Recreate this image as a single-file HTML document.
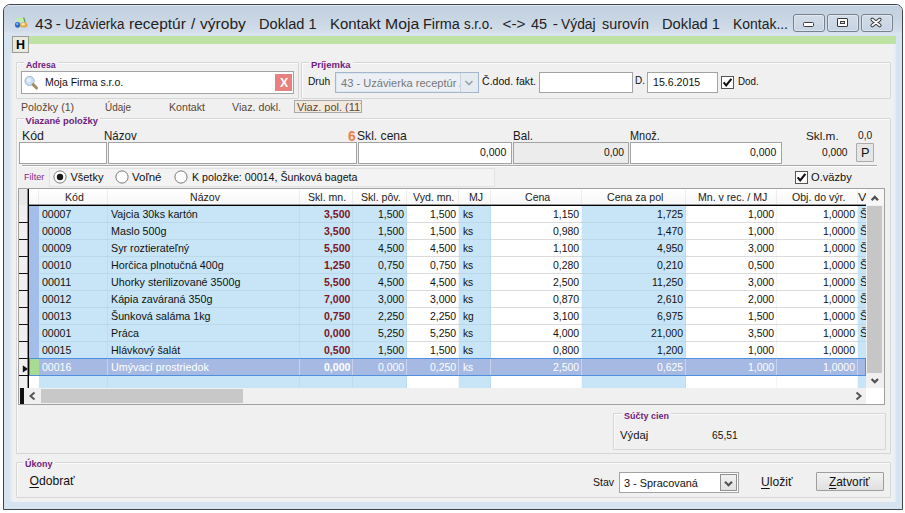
<!DOCTYPE html><html><head><meta charset="utf-8"><style>
html,body{margin:0;padding:0;width:905px;height:513px;overflow:hidden;background:#fff;}
body{position:relative;font-family:"Liberation Sans", sans-serif;}
.a{position:absolute;box-sizing:border-box;}
.t{white-space:nowrap;font-family:"Liberation Sans", sans-serif;color:#000;}
u{text-decoration:underline;text-underline-offset:2px;}
</style></head><body>
<div class="a" style="left:3px;top:4px;width:900px;height:506px;border:1px solid #3f4650;border-radius:7px 7px 0 0;background:#d6e3f0;"></div>
<div class="a" style="left:4px;top:5px;width:898px;height:30px;border-radius:6px 6px 0 0;background:linear-gradient(#c2d0df,#c8d5e3 45%,#d2dde9 85%,#dce6f0);"></div>
<div class="a" style="left:8px;top:5px;width:890px;height:1px;background:rgba(255,255,255,0.45);"></div>
<div class="a" style="left:12px;top:36px;width:884px;height:466px;background:#f0f0f0;"></div>
<div class="a" style="left:9px;top:53px;width:5px;height:449px;background:linear-gradient(90deg,#d6e3f0,#e9eef4 60%,#f0f0f0);"></div>
<div class="a" style="left:890px;top:44px;width:6px;height:458px;background:linear-gradient(90deg,#f0f0f0,#eef1f5 50%,#e2eaf3);"></div>
<div class="a" style="left:29px;top:36px;width:867px;height:8px;background:#bee2a3;"></div>
<div class="a" style="left:12px;top:36px;width:17px;height:17px;background:#e9e9dd;border:1px solid #9c9c96;"></div>
<div class="a t" style="left:16.00px;top:38.84px;font-size:12px;line-height:12px;font-weight:bold;transform:scaleX(1.0385);transform-origin:0 0;">H</div>
<svg class="a" style="left:12px;top:13px" width="20" height="18" viewBox="0 0 20 18">
<path d="M4 5 L11.5 4.8 L13 8.5 L6 8.8 Z" fill="#bdf0a6"/>
<path d="M11 4.6 L12.3 4.8 L13.8 9.5 L12.6 9.6 Z" fill="#4f8f55"/>
<ellipse cx="5.6" cy="11.8" rx="2.6" ry="2.9" fill="#2a66c8"/>
<ellipse cx="5.3" cy="11" rx="1.1" ry="1.2" fill="#7fc0ff"/>
<ellipse cx="11.8" cy="11.9" rx="3.9" ry="2.7" fill="#dcae48"/>
<ellipse cx="11.2" cy="11.2" rx="1.8" ry="1.3" fill="#ffe0b0"/>
</svg>
<div class="a t" style="left:34.80px;top:15.75px;font-size:15.3px;line-height:15.3px;transform:scaleX(1.0343);transform-origin:0 0;color:#222;">43</div>
<div class="a t" style="left:55.80px;top:15.75px;font-size:15.3px;line-height:15.3px;color:#222;">-</div>
<div class="a t" style="left:64.70px;top:15.75px;font-size:15.3px;line-height:15.3px;transform:scaleX(0.8733);transform-origin:0 0;color:#222;">Uzávierka</div>
<div class="a t" style="left:129.20px;top:15.75px;font-size:15.3px;line-height:15.3px;transform:scaleX(1.0139);transform-origin:0 0;color:#222;">receptúr</div>
<div class="a t" style="left:191.10px;top:15.75px;font-size:15.3px;line-height:15.3px;color:#222;">/</div>
<div class="a t" style="left:199.70px;top:15.75px;font-size:15.3px;line-height:15.3px;transform:scaleX(1.0186);transform-origin:0 0;color:#222;">výroby</div>
<div class="a t" style="left:258.70px;top:15.75px;font-size:15.3px;line-height:15.3px;transform:scaleX(0.9539);transform-origin:0 0;color:#222;">Doklad 1</div>
<div class="a t" style="left:330.40px;top:15.75px;font-size:15.3px;line-height:15.3px;transform:scaleX(0.9772);transform-origin:0 0;color:#222;">Kontakt</div>
<div class="a t" style="left:385.10px;top:15.75px;font-size:15.3px;line-height:15.3px;transform:scaleX(1.0314);transform-origin:0 0;color:#222;">Moja</div>
<div class="a t" style="left:422.90px;top:15.75px;font-size:15.3px;line-height:15.3px;transform:scaleX(0.9414);transform-origin:0 0;color:#222;">Firma</div>
<div class="a t" style="left:463.60px;top:15.75px;font-size:15.3px;line-height:15.3px;transform:scaleX(0.8715);transform-origin:0 0;color:#222;">s.r.o.</div>
<div class="a t" style="left:502.50px;top:15.75px;font-size:15.3px;line-height:15.3px;color:#222;">&lt;-&gt;</div>
<div class="a t" style="left:530.70px;top:15.75px;font-size:15.3px;line-height:15.3px;transform:scaleX(0.9461);transform-origin:0 0;color:#222;">45</div>
<div class="a t" style="left:552.80px;top:15.75px;font-size:15.3px;line-height:15.3px;color:#222;">-</div>
<div class="a t" style="left:560.80px;top:15.75px;font-size:15.3px;line-height:15.3px;transform:scaleX(0.9041);transform-origin:0 0;color:#222;">Výdaj</div>
<div class="a t" style="left:601.50px;top:15.75px;font-size:15.3px;line-height:15.3px;transform:scaleX(0.9368);transform-origin:0 0;color:#222;">surovín</div>
<div class="a t" style="left:661.90px;top:15.75px;font-size:15.3px;line-height:15.3px;transform:scaleX(0.9605);transform-origin:0 0;color:#222;">Doklad 1</div>
<div class="a t" style="left:733.20px;top:15.75px;font-size:15.3px;line-height:15.3px;transform:scaleX(0.9109);transform-origin:0 0;color:#222;">Kontak...</div>
<div class="a" style="left:793px;top:14px;width:32px;height:18px;border:1px solid #76838f;border-radius:3px;background:linear-gradient(#d3dde9,#c6d3e2);box-shadow:inset 0 0 0 1px rgba(255,255,255,0.35);"></div>
<div class="a" style="left:827px;top:14px;width:32px;height:18px;border:1px solid #76838f;border-radius:3px;background:linear-gradient(#d3dde9,#c6d3e2);box-shadow:inset 0 0 0 1px rgba(255,255,255,0.35);"></div>
<div class="a" style="left:861px;top:14px;width:32px;height:18px;border:1px solid #76838f;border-radius:3px;background:linear-gradient(#d3dde9,#c6d3e2);box-shadow:inset 0 0 0 1px rgba(255,255,255,0.35);"></div>
<div class="a" style="left:803px;top:22px;width:11px;height:5px;background:#fff;border:1px solid #3a3a3a;border-radius:1.5px;"></div>
<div class="a" style="left:837px;top:18px;width:11px;height:9px;border:1px solid #3a3a3a;background:#fff;border-radius:1px;"></div>
<div class="a" style="left:840px;top:21px;width:5px;height:3px;border:1px solid #3a3a3a;background:#dfe6ee;"></div>
<svg class="a" style="left:868px;top:16px" width="16" height="13" viewBox="0 0 16 13">
<path d="M4.2 3.5 L11.8 9.5 M11.8 3.5 L4.2 9.5" stroke="#3a3a3a" stroke-width="3.6" stroke-linecap="round"/>
<path d="M4.2 3.5 L11.8 9.5 M11.8 3.5 L4.2 9.5" stroke="#fff" stroke-width="1.6" stroke-linecap="round"/></svg>
<div class="a" style="left:16px;top:62px;width:283px;height:37px;border:1px solid #d6d6d6;border-radius:1px;box-shadow:inset 1px 1px 0 #fbfbfb;"></div>
<div class="a" style="left:24px;top:60px;width:33.8px;height:6px;background:#f0f0f0;"></div>
<div class="a t" style="left:26.00px;top:59.74px;font-size:9.4px;line-height:9.4px;font-weight:bold;transform:scaleX(0.9350);transform-origin:0 0;color:#6e1c7e;">Adresa</div>
<div class="a" style="left:301px;top:62px;width:590px;height:37px;border:1px solid #d6d6d6;border-radius:1px;box-shadow:inset 1px 1px 0 #fbfbfb;"></div>
<div class="a" style="left:309.3px;top:60px;width:43.5px;height:6px;background:#f0f0f0;"></div>
<div class="a t" style="left:311.30px;top:59.74px;font-size:9.4px;line-height:9.4px;font-weight:bold;transform:scaleX(1.0079);transform-origin:0 0;color:#6e1c7e;">Príjemka</div>
<div class="a" style="left:21px;top:71px;width:273px;height:23px;background:#fff;border:1px solid #a3a3a3;"></div>
<svg class="a" style="left:24px;top:75px" width="16" height="16" viewBox="0 0 16 16">
<circle cx="5.6" cy="6" r="4.6" fill="#c9def5" stroke="#9db8d6" stroke-width="1"/>
<circle cx="4.8" cy="5.2" r="2.2" fill="#e3effb"/>
<path d="M9.2 9.6 L12.6 13" stroke="#a88a62" stroke-width="3" stroke-linecap="round"/></svg>
<div class="a t" style="left:45.30px;top:76.69px;font-size:11px;line-height:11px;transform:scaleX(0.9548);transform-origin:0 0;color:#111;">Moja Firma s.r.o.</div>
<div class="a" style="left:275px;top:74px;width:17px;height:17px;background:#e6817f;"></div>
<div class="a t" style="left:279.60px;top:77.14px;font-size:12px;line-height:12px;font-weight:bold;transform:scaleX(1.0244);transform-origin:0 0;color:#fff;">X</div>
<div class="a t" style="left:308.30px;top:75.69px;font-size:11px;line-height:11px;transform:scaleX(0.9270);transform-origin:0 0;color:#111;">Druh</div>
<div class="a" style="left:335px;top:72px;width:144px;height:21px;background:#ecf0f4;border:1px solid #a3b6cc;box-shadow:inset 0 0 0 1px #dde6ef;"></div>
<div class="a" style="left:336px;top:73px;width:124px;height:19px;overflow:hidden;">
<div class="a t" style="left:4.50px;top:5.09px;font-size:11px;line-height:11px;transform:scaleX(1.0100);transform-origin:0 0;color:#777;">43 - Uzávierka receptúr / výroby</div>
</div>
<div class="a" style="left:460px;top:73px;width:18px;height:19px;border-left:1px solid #c9d3de;background:#e6ebf0;"></div>
<svg class="a" style="left:464px;top:79px" width="10" height="8" viewBox="0 0 10 8"><path d="M1.5 2 L5 5.5 L8.5 2" stroke="#9aa3ad" stroke-width="1.6" fill="none"/></svg>
<div class="a t" style="left:482.40px;top:76.09px;font-size:11px;line-height:11px;transform:scaleX(0.9600);transform-origin:0 0;color:#111;">Č.dod. fakt.</div>
<div class="a" style="left:539px;top:72px;width:94px;height:21px;background:#fff;border:1px solid #a3a3a3;"></div>
<div class="a t" style="left:634.50px;top:75.39px;font-size:11px;line-height:11px;transform:scaleX(0.9091);transform-origin:0 0;color:#111;">D.</div>
<div class="a" style="left:647px;top:72px;width:71px;height:21px;background:#fff;border:1px solid #a3a3a3;"></div>
<div class="a t" style="left:652.70px;top:77.49px;font-size:11px;line-height:11px;transform:scaleX(0.9646);transform-origin:0 0;color:#111;">15.6.2015</div>
<div class="a" style="left:721px;top:76px;width:13px;height:13px;background:#fff;border:1px solid #555;"></div>
<svg class="a" style="left:721px;top:76px" width="13" height="13" viewBox="0 0 13 13"><path d="M2.6 6.4 L5.2 9.4 L10.4 2.8" stroke="#111" stroke-width="2.1" fill="none"/></svg>
<div class="a t" style="left:737.60px;top:76.49px;font-size:11px;line-height:11px;transform:scaleX(0.8866);transform-origin:0 0;color:#111;">Dod.</div>
<div class="a t" style="left:20.50px;top:101.59px;font-size:11px;line-height:11px;transform:scaleX(0.9652);transform-origin:0 0;color:#5e4634;">Položky (1)</div>
<div class="a t" style="left:104.50px;top:101.59px;font-size:11px;line-height:11px;transform:scaleX(0.9047);transform-origin:0 0;color:#5e4634;">Údaje</div>
<div class="a t" style="left:169.10px;top:101.59px;font-size:11px;line-height:11px;transform:scaleX(0.9651);transform-origin:0 0;color:#5e4634;">Kontakt</div>
<div class="a t" style="left:232.20px;top:101.59px;font-size:11px;line-height:11px;transform:scaleX(0.9694);transform-origin:0 0;color:#5e4634;">Viaz. dokl.</div>
<div class="a" style="left:294px;top:100px;width:68px;height:13px;background:#f2e9dc;border:1px solid #a9a9a9;"></div>
<div class="a" style="left:295px;top:101px;width:66px;height:11px;overflow:hidden;">
<div class="a t" style="left:2.00px;top:0.69px;font-size:11px;line-height:11px;color:#5e4634;">Viaz. pol. (11)</div>
</div>
<div class="a" style="left:16px;top:118px;width:875px;height:336px;border:1px solid #d6d6d6;border-radius:1px;box-shadow:inset 1px 1px 0 #fbfbfb;"></div>
<div class="a" style="left:23.6px;top:116px;width:76.5px;height:6px;background:#f0f0f0;"></div>
<div class="a t" style="left:25.60px;top:116.14px;font-size:9.4px;line-height:9.4px;font-weight:bold;color:#6e1c7e;">Viazané položky</div>
<div class="a t" style="left:22.10px;top:129.67px;font-size:12.2px;line-height:12.2px;transform:scaleX(1.0135);transform-origin:0 0;color:#1a1a1a;">Kód</div>
<div class="a t" style="left:104.30px;top:129.67px;font-size:12.2px;line-height:12.2px;transform:scaleX(0.9457);transform-origin:0 0;color:#1a1a1a;">Názov</div>
<div class="a t" style="left:347.90px;top:128.55px;font-size:14px;line-height:14px;font-weight:bold;transform:scaleX(0.9762);transform-origin:0 0;color:#ee8048;">6</div>
<div class="a t" style="left:356.60px;top:129.67px;font-size:12.2px;line-height:12.2px;transform:scaleX(0.9944);transform-origin:0 0;color:#1a1a1a;">Skl. cena</div>
<div class="a t" style="left:513.30px;top:129.67px;font-size:12.2px;line-height:12.2px;transform:scaleX(0.9514);transform-origin:0 0;color:#1a1a1a;">Bal.</div>
<div class="a t" style="left:630.40px;top:129.67px;font-size:12.2px;line-height:12.2px;transform:scaleX(0.8940);transform-origin:0 0;color:#1a1a1a;">Množ.</div>
<div class="a t" style="left:805.50px;top:129.98px;font-size:11.6px;line-height:11.6px;transform:scaleX(1.0148);transform-origin:0 0;color:#1a1a1a;">Skl.m.</div>
<div class="a t" style="left:857.60px;top:129.93px;font-size:11.3px;line-height:11.3px;transform:scaleX(0.9041);transform-origin:0 0;color:#1a1a1a;">0,0</div>
<div class="a" style="left:19px;top:142px;width:88px;height:22px;background:#fff;border:1px solid #a3a3a3;"></div>
<div class="a" style="left:108px;top:142px;width:249px;height:22px;background:#fff;border:1px solid #a3a3a3;"></div>
<div class="a" style="left:358px;top:142px;width:154px;height:22px;background:#fff;border:1px solid #a3a3a3;"></div>
<div class="a t" style="left:480.40px;top:146.69px;font-size:11px;line-height:11px;transform:scaleX(0.9519);transform-origin:0 0;color:#111;">0,000</div>
<div class="a" style="left:513px;top:142px;width:116px;height:22px;background:#ececec;border:1px solid #a3a3a3;"></div>
<div class="a t" style="left:603.50px;top:146.69px;font-size:11px;line-height:11px;transform:scaleX(0.9343);transform-origin:0 0;color:#111;">0,00</div>
<div class="a" style="left:630px;top:142px;width:152px;height:22px;background:#fff;border:1px solid #a3a3a3;"></div>
<div class="a t" style="left:750.30px;top:146.69px;font-size:11px;line-height:11px;transform:scaleX(0.9519);transform-origin:0 0;color:#111;">0,000</div>
<div class="a t" style="left:821.70px;top:146.69px;font-size:11px;line-height:11px;transform:scaleX(0.9265);transform-origin:0 0;color:#111;">0,000</div>
<div class="a" style="left:856px;top:143px;width:18px;height:19px;background:#e6e6e6;border:1px solid #ababab;border-radius:1px;"></div>
<div class="a t" style="left:861.00px;top:146.84px;font-size:12px;line-height:12px;transform:scaleX(1.0619);transform-origin:0 0;color:#111;">P</div>
<div class="a" style="left:22px;top:165px;width:855px;height:1px;background:#a9a9a9;"></div>
<div class="a" style="left:22px;top:166px;width:855px;height:1px;background:#fff;"></div>
<div class="a t" style="left:23.60px;top:172.98px;font-size:9px;line-height:9px;transform:scaleX(1.0151);transform-origin:0 0;color:#7a2a8a;">Filter</div>
<div class="a" style="left:49px;top:168px;width:446px;height:19px;background:#f3f3f3;border:1px solid #e2e2e2;"></div>
<svg class="a" style="left:53.3px;top:170.3px" width="14" height="14" viewBox="0 0 14 14"><circle cx="7" cy="7" r="6.1" fill="#fff" stroke="#7a7a7a" stroke-width="1"/><circle cx="7" cy="7" r="3.2" fill="#1a1a1a"/></svg>
<div class="a t" style="left:70.40px;top:172.19px;font-size:11px;line-height:11px;color:#111;">Všetky</div>
<svg class="a" style="left:115.3px;top:170.3px" width="14" height="14" viewBox="0 0 14 14"><circle cx="7" cy="7" r="6.1" fill="#fff" stroke="#7a7a7a" stroke-width="1"/></svg>
<div class="a t" style="left:132.00px;top:172.19px;font-size:11px;line-height:11px;transform:scaleX(1.0428);transform-origin:0 0;color:#111;">Voľné</div>
<svg class="a" style="left:174.3px;top:170.3px" width="14" height="14" viewBox="0 0 14 14"><circle cx="7" cy="7" r="6.1" fill="#fff" stroke="#7a7a7a" stroke-width="1"/></svg>
<div class="a t" style="left:191.50px;top:172.19px;font-size:11px;line-height:11px;transform:scaleX(0.9700);transform-origin:0 0;color:#111;">K položke: 00014, Šunková bageta</div>
<div class="a" style="left:795px;top:171px;width:13px;height:13px;background:#fff;border:1px solid #555;"></div>
<svg class="a" style="left:795px;top:171px" width="13" height="13" viewBox="0 0 13 13"><path d="M2.6 6.4 L5.2 9.4 L10.4 2.8" stroke="#111" stroke-width="2.1" fill="none"/></svg>
<div class="a t" style="left:811.30px;top:172.19px;font-size:11px;line-height:11px;transform:scaleX(1.0088);transform-origin:0 0;color:#111;">O.väzby</div>
<div class="a" style="left:18px;top:188px;width:867px;height:217px;background:#fff;border:1px solid #a0a0a0;"></div>
<div class="a" style="left:19px;top:189px;width:847px;height:16px;background:linear-gradient(#ffffff,#f7f7f7);"></div>
<div class="a" style="left:38px;top:190px;width:1px;height:14px;background:#ececec;"></div>
<div class="a" style="left:107px;top:190px;width:1px;height:14px;background:#ececec;"></div>
<div class="a" style="left:299px;top:190px;width:1px;height:14px;background:#ececec;"></div>
<div class="a" style="left:352px;top:190px;width:1px;height:14px;background:#ececec;"></div>
<div class="a" style="left:406px;top:190px;width:1px;height:14px;background:#ececec;"></div>
<div class="a" style="left:458px;top:190px;width:1px;height:14px;background:#ececec;"></div>
<div class="a" style="left:490px;top:190px;width:1px;height:14px;background:#ececec;"></div>
<div class="a" style="left:581px;top:190px;width:1px;height:14px;background:#ececec;"></div>
<div class="a" style="left:685px;top:190px;width:1px;height:14px;background:#ececec;"></div>
<div class="a" style="left:776px;top:190px;width:1px;height:14px;background:#ececec;"></div>
<div class="a" style="left:857px;top:190px;width:1px;height:14px;background:#ececec;"></div>
<div class="a t" style="left:65.11px;top:191.69px;font-size:11px;line-height:11px;transform:scaleX(0.9600);transform-origin:0 0;color:#222;">Kód</div>
<div class="a t" style="left:190.03px;top:191.69px;font-size:11px;line-height:11px;transform:scaleX(0.9600);transform-origin:0 0;color:#222;">Názov</div>
<div class="a t" style="left:308.43px;top:191.69px;font-size:11px;line-height:11px;transform:scaleX(0.9600);transform-origin:0 0;color:#222;">Skl. mn.</div>
<div class="a t" style="left:361.14px;top:191.69px;font-size:11px;line-height:11px;transform:scaleX(0.9600);transform-origin:0 0;color:#222;">Skl. pôv.</div>
<div class="a t" style="left:413.36px;top:191.69px;font-size:11px;line-height:11px;transform:scaleX(0.9600);transform-origin:0 0;color:#222;">Vyd. mn.</div>
<div class="a t" style="left:468.96px;top:191.69px;font-size:11px;line-height:11px;transform:scaleX(0.9600);transform-origin:0 0;color:#222;">MJ</div>
<div class="a t" style="left:524.88px;top:191.69px;font-size:11px;line-height:11px;transform:scaleX(0.9600);transform-origin:0 0;color:#222;">Cena</div>
<div class="a t" style="left:606.82px;top:191.69px;font-size:11px;line-height:11px;transform:scaleX(0.9600);transform-origin:0 0;color:#222;">Cena za pol</div>
<div class="a t" style="left:697.89px;top:191.69px;font-size:11px;line-height:11px;transform:scaleX(0.9600);transform-origin:0 0;color:#222;">Mn. v rec. / MJ</div>
<div class="a t" style="left:791.80px;top:191.69px;font-size:11px;line-height:11px;transform:scaleX(0.9600);transform-origin:0 0;color:#222;">Obj. do výr.</div>
<div class="a t" style="left:857.60px;top:191.69px;font-size:11px;line-height:11px;transform:scaleX(1.1585);transform-origin:0 0;color:#222;">V</div>
<div class="a" style="left:19px;top:204px;width:847px;height:1px;background:#9a9a9a;"></div>
<div class="a" style="left:19px;top:205px;width:847px;height:1px;background:#000;"></div>
<div class="a" style="left:19px;top:189px;width:9px;height:199px;background:#f0f0f0;"></div>
<div class="a" style="left:19px;top:189px;width:9px;height:16px;background:#e9e9e9;"></div>
<div class="a" style="left:27px;top:189px;width:1px;height:199px;background:#8a8a8a;"></div>
<div class="a" style="left:28px;top:189px;width:1px;height:199px;background:#000;"></div>
<div class="a" style="left:39px;top:206px;width:69px;height:182px;background:#c7e5f7;"></div>
<div class="a" style="left:108px;top:206px;width:192px;height:182px;background:#c7e5f7;"></div>
<div class="a" style="left:300px;top:206px;width:53px;height:182px;background:#c7e5f7;"></div>
<div class="a" style="left:353px;top:206px;width:54px;height:182px;background:#c7e5f7;"></div>
<div class="a" style="left:407px;top:206px;width:52px;height:182px;background:#fff;"></div>
<div class="a" style="left:459px;top:206px;width:32px;height:182px;background:#c7e5f7;"></div>
<div class="a" style="left:491px;top:206px;width:91px;height:182px;background:#fff;"></div>
<div class="a" style="left:582px;top:206px;width:104px;height:182px;background:#c7e5f7;"></div>
<div class="a" style="left:686px;top:206px;width:91px;height:182px;background:#fff;"></div>
<div class="a" style="left:777px;top:206px;width:81px;height:182px;background:#fff;"></div>
<div class="a" style="left:858px;top:206px;width:8px;height:182px;background:#c7e5f7;"></div>
<div class="a" style="left:29px;top:206px;width:10px;height:169px;background:#a3bfe9;"></div>
<div class="a" style="left:107px;top:206px;width:1px;height:182px;background:rgba(0,0,0,0.04);"></div>
<div class="a" style="left:299px;top:206px;width:1px;height:182px;background:rgba(0,0,0,0.04);"></div>
<div class="a" style="left:352px;top:206px;width:1px;height:182px;background:rgba(0,0,0,0.04);"></div>
<div class="a" style="left:406px;top:206px;width:1px;height:182px;background:rgba(0,0,0,0.04);"></div>
<div class="a" style="left:458px;top:206px;width:1px;height:182px;background:rgba(0,0,0,0.04);"></div>
<div class="a" style="left:490px;top:206px;width:1px;height:182px;background:rgba(0,0,0,0.04);"></div>
<div class="a" style="left:581px;top:206px;width:1px;height:182px;background:rgba(0,0,0,0.04);"></div>
<div class="a" style="left:685px;top:206px;width:1px;height:182px;background:rgba(0,0,0,0.04);"></div>
<div class="a" style="left:776px;top:206px;width:1px;height:182px;background:rgba(0,0,0,0.04);"></div>
<div class="a" style="left:857px;top:206px;width:1px;height:182px;background:rgba(0,0,0,0.04);"></div>
<div class="a" style="left:39px;top:222px;width:69px;height:1px;background:rgba(0,0,0,0.055);"></div>
<div class="a" style="left:108px;top:222px;width:192px;height:1px;background:rgba(0,0,0,0.055);"></div>
<div class="a" style="left:300px;top:222px;width:53px;height:1px;background:rgba(0,0,0,0.055);"></div>
<div class="a" style="left:353px;top:222px;width:54px;height:1px;background:rgba(0,0,0,0.055);"></div>
<div class="a" style="left:407px;top:222px;width:52px;height:1px;background:rgba(0,0,0,0.14);"></div>
<div class="a" style="left:459px;top:222px;width:32px;height:1px;background:rgba(0,0,0,0.055);"></div>
<div class="a" style="left:491px;top:222px;width:91px;height:1px;background:rgba(0,0,0,0.14);"></div>
<div class="a" style="left:582px;top:222px;width:104px;height:1px;background:rgba(0,0,0,0.055);"></div>
<div class="a" style="left:686px;top:222px;width:91px;height:1px;background:rgba(0,0,0,0.14);"></div>
<div class="a" style="left:777px;top:222px;width:81px;height:1px;background:rgba(0,0,0,0.14);"></div>
<div class="a" style="left:858px;top:222px;width:8px;height:1px;background:rgba(0,0,0,0.055);"></div>
<div class="a" style="left:19px;top:222px;width:9px;height:1px;background:#111;"></div>
<div class="a" style="left:39px;top:239px;width:69px;height:1px;background:rgba(0,0,0,0.055);"></div>
<div class="a" style="left:108px;top:239px;width:192px;height:1px;background:rgba(0,0,0,0.055);"></div>
<div class="a" style="left:300px;top:239px;width:53px;height:1px;background:rgba(0,0,0,0.055);"></div>
<div class="a" style="left:353px;top:239px;width:54px;height:1px;background:rgba(0,0,0,0.055);"></div>
<div class="a" style="left:407px;top:239px;width:52px;height:1px;background:rgba(0,0,0,0.14);"></div>
<div class="a" style="left:459px;top:239px;width:32px;height:1px;background:rgba(0,0,0,0.055);"></div>
<div class="a" style="left:491px;top:239px;width:91px;height:1px;background:rgba(0,0,0,0.14);"></div>
<div class="a" style="left:582px;top:239px;width:104px;height:1px;background:rgba(0,0,0,0.055);"></div>
<div class="a" style="left:686px;top:239px;width:91px;height:1px;background:rgba(0,0,0,0.14);"></div>
<div class="a" style="left:777px;top:239px;width:81px;height:1px;background:rgba(0,0,0,0.14);"></div>
<div class="a" style="left:858px;top:239px;width:8px;height:1px;background:rgba(0,0,0,0.055);"></div>
<div class="a" style="left:19px;top:239px;width:9px;height:1px;background:#111;"></div>
<div class="a" style="left:39px;top:256px;width:69px;height:1px;background:rgba(0,0,0,0.055);"></div>
<div class="a" style="left:108px;top:256px;width:192px;height:1px;background:rgba(0,0,0,0.055);"></div>
<div class="a" style="left:300px;top:256px;width:53px;height:1px;background:rgba(0,0,0,0.055);"></div>
<div class="a" style="left:353px;top:256px;width:54px;height:1px;background:rgba(0,0,0,0.055);"></div>
<div class="a" style="left:407px;top:256px;width:52px;height:1px;background:rgba(0,0,0,0.14);"></div>
<div class="a" style="left:459px;top:256px;width:32px;height:1px;background:rgba(0,0,0,0.055);"></div>
<div class="a" style="left:491px;top:256px;width:91px;height:1px;background:rgba(0,0,0,0.14);"></div>
<div class="a" style="left:582px;top:256px;width:104px;height:1px;background:rgba(0,0,0,0.055);"></div>
<div class="a" style="left:686px;top:256px;width:91px;height:1px;background:rgba(0,0,0,0.14);"></div>
<div class="a" style="left:777px;top:256px;width:81px;height:1px;background:rgba(0,0,0,0.14);"></div>
<div class="a" style="left:858px;top:256px;width:8px;height:1px;background:rgba(0,0,0,0.055);"></div>
<div class="a" style="left:19px;top:256px;width:9px;height:1px;background:#111;"></div>
<div class="a" style="left:39px;top:273px;width:69px;height:1px;background:rgba(0,0,0,0.055);"></div>
<div class="a" style="left:108px;top:273px;width:192px;height:1px;background:rgba(0,0,0,0.055);"></div>
<div class="a" style="left:300px;top:273px;width:53px;height:1px;background:rgba(0,0,0,0.055);"></div>
<div class="a" style="left:353px;top:273px;width:54px;height:1px;background:rgba(0,0,0,0.055);"></div>
<div class="a" style="left:407px;top:273px;width:52px;height:1px;background:rgba(0,0,0,0.14);"></div>
<div class="a" style="left:459px;top:273px;width:32px;height:1px;background:rgba(0,0,0,0.055);"></div>
<div class="a" style="left:491px;top:273px;width:91px;height:1px;background:rgba(0,0,0,0.14);"></div>
<div class="a" style="left:582px;top:273px;width:104px;height:1px;background:rgba(0,0,0,0.055);"></div>
<div class="a" style="left:686px;top:273px;width:91px;height:1px;background:rgba(0,0,0,0.14);"></div>
<div class="a" style="left:777px;top:273px;width:81px;height:1px;background:rgba(0,0,0,0.14);"></div>
<div class="a" style="left:858px;top:273px;width:8px;height:1px;background:rgba(0,0,0,0.055);"></div>
<div class="a" style="left:19px;top:273px;width:9px;height:1px;background:#111;"></div>
<div class="a" style="left:39px;top:290px;width:69px;height:1px;background:rgba(0,0,0,0.055);"></div>
<div class="a" style="left:108px;top:290px;width:192px;height:1px;background:rgba(0,0,0,0.055);"></div>
<div class="a" style="left:300px;top:290px;width:53px;height:1px;background:rgba(0,0,0,0.055);"></div>
<div class="a" style="left:353px;top:290px;width:54px;height:1px;background:rgba(0,0,0,0.055);"></div>
<div class="a" style="left:407px;top:290px;width:52px;height:1px;background:rgba(0,0,0,0.14);"></div>
<div class="a" style="left:459px;top:290px;width:32px;height:1px;background:rgba(0,0,0,0.055);"></div>
<div class="a" style="left:491px;top:290px;width:91px;height:1px;background:rgba(0,0,0,0.14);"></div>
<div class="a" style="left:582px;top:290px;width:104px;height:1px;background:rgba(0,0,0,0.055);"></div>
<div class="a" style="left:686px;top:290px;width:91px;height:1px;background:rgba(0,0,0,0.14);"></div>
<div class="a" style="left:777px;top:290px;width:81px;height:1px;background:rgba(0,0,0,0.14);"></div>
<div class="a" style="left:858px;top:290px;width:8px;height:1px;background:rgba(0,0,0,0.055);"></div>
<div class="a" style="left:19px;top:290px;width:9px;height:1px;background:#111;"></div>
<div class="a" style="left:39px;top:307px;width:69px;height:1px;background:rgba(0,0,0,0.055);"></div>
<div class="a" style="left:108px;top:307px;width:192px;height:1px;background:rgba(0,0,0,0.055);"></div>
<div class="a" style="left:300px;top:307px;width:53px;height:1px;background:rgba(0,0,0,0.055);"></div>
<div class="a" style="left:353px;top:307px;width:54px;height:1px;background:rgba(0,0,0,0.055);"></div>
<div class="a" style="left:407px;top:307px;width:52px;height:1px;background:rgba(0,0,0,0.14);"></div>
<div class="a" style="left:459px;top:307px;width:32px;height:1px;background:rgba(0,0,0,0.055);"></div>
<div class="a" style="left:491px;top:307px;width:91px;height:1px;background:rgba(0,0,0,0.14);"></div>
<div class="a" style="left:582px;top:307px;width:104px;height:1px;background:rgba(0,0,0,0.055);"></div>
<div class="a" style="left:686px;top:307px;width:91px;height:1px;background:rgba(0,0,0,0.14);"></div>
<div class="a" style="left:777px;top:307px;width:81px;height:1px;background:rgba(0,0,0,0.14);"></div>
<div class="a" style="left:858px;top:307px;width:8px;height:1px;background:rgba(0,0,0,0.055);"></div>
<div class="a" style="left:19px;top:307px;width:9px;height:1px;background:#111;"></div>
<div class="a" style="left:39px;top:324px;width:69px;height:1px;background:rgba(0,0,0,0.055);"></div>
<div class="a" style="left:108px;top:324px;width:192px;height:1px;background:rgba(0,0,0,0.055);"></div>
<div class="a" style="left:300px;top:324px;width:53px;height:1px;background:rgba(0,0,0,0.055);"></div>
<div class="a" style="left:353px;top:324px;width:54px;height:1px;background:rgba(0,0,0,0.055);"></div>
<div class="a" style="left:407px;top:324px;width:52px;height:1px;background:rgba(0,0,0,0.14);"></div>
<div class="a" style="left:459px;top:324px;width:32px;height:1px;background:rgba(0,0,0,0.055);"></div>
<div class="a" style="left:491px;top:324px;width:91px;height:1px;background:rgba(0,0,0,0.14);"></div>
<div class="a" style="left:582px;top:324px;width:104px;height:1px;background:rgba(0,0,0,0.055);"></div>
<div class="a" style="left:686px;top:324px;width:91px;height:1px;background:rgba(0,0,0,0.14);"></div>
<div class="a" style="left:777px;top:324px;width:81px;height:1px;background:rgba(0,0,0,0.14);"></div>
<div class="a" style="left:858px;top:324px;width:8px;height:1px;background:rgba(0,0,0,0.055);"></div>
<div class="a" style="left:19px;top:324px;width:9px;height:1px;background:#111;"></div>
<div class="a" style="left:39px;top:341px;width:69px;height:1px;background:rgba(0,0,0,0.055);"></div>
<div class="a" style="left:108px;top:341px;width:192px;height:1px;background:rgba(0,0,0,0.055);"></div>
<div class="a" style="left:300px;top:341px;width:53px;height:1px;background:rgba(0,0,0,0.055);"></div>
<div class="a" style="left:353px;top:341px;width:54px;height:1px;background:rgba(0,0,0,0.055);"></div>
<div class="a" style="left:407px;top:341px;width:52px;height:1px;background:rgba(0,0,0,0.14);"></div>
<div class="a" style="left:459px;top:341px;width:32px;height:1px;background:rgba(0,0,0,0.055);"></div>
<div class="a" style="left:491px;top:341px;width:91px;height:1px;background:rgba(0,0,0,0.14);"></div>
<div class="a" style="left:582px;top:341px;width:104px;height:1px;background:rgba(0,0,0,0.055);"></div>
<div class="a" style="left:686px;top:341px;width:91px;height:1px;background:rgba(0,0,0,0.14);"></div>
<div class="a" style="left:777px;top:341px;width:81px;height:1px;background:rgba(0,0,0,0.14);"></div>
<div class="a" style="left:858px;top:341px;width:8px;height:1px;background:rgba(0,0,0,0.055);"></div>
<div class="a" style="left:19px;top:341px;width:9px;height:1px;background:#111;"></div>
<div class="a" style="left:39px;top:358px;width:69px;height:1px;background:rgba(0,0,0,0.055);"></div>
<div class="a" style="left:108px;top:358px;width:192px;height:1px;background:rgba(0,0,0,0.055);"></div>
<div class="a" style="left:300px;top:358px;width:53px;height:1px;background:rgba(0,0,0,0.055);"></div>
<div class="a" style="left:353px;top:358px;width:54px;height:1px;background:rgba(0,0,0,0.055);"></div>
<div class="a" style="left:407px;top:358px;width:52px;height:1px;background:rgba(0,0,0,0.14);"></div>
<div class="a" style="left:459px;top:358px;width:32px;height:1px;background:rgba(0,0,0,0.055);"></div>
<div class="a" style="left:491px;top:358px;width:91px;height:1px;background:rgba(0,0,0,0.14);"></div>
<div class="a" style="left:582px;top:358px;width:104px;height:1px;background:rgba(0,0,0,0.055);"></div>
<div class="a" style="left:686px;top:358px;width:91px;height:1px;background:rgba(0,0,0,0.14);"></div>
<div class="a" style="left:777px;top:358px;width:81px;height:1px;background:rgba(0,0,0,0.14);"></div>
<div class="a" style="left:858px;top:358px;width:8px;height:1px;background:rgba(0,0,0,0.055);"></div>
<div class="a" style="left:19px;top:358px;width:9px;height:1px;background:#111;"></div>
<div class="a" style="left:39px;top:375px;width:69px;height:1px;background:rgba(0,0,0,0.055);"></div>
<div class="a" style="left:108px;top:375px;width:192px;height:1px;background:rgba(0,0,0,0.055);"></div>
<div class="a" style="left:300px;top:375px;width:53px;height:1px;background:rgba(0,0,0,0.055);"></div>
<div class="a" style="left:353px;top:375px;width:54px;height:1px;background:rgba(0,0,0,0.055);"></div>
<div class="a" style="left:407px;top:375px;width:52px;height:1px;background:rgba(0,0,0,0.14);"></div>
<div class="a" style="left:459px;top:375px;width:32px;height:1px;background:rgba(0,0,0,0.055);"></div>
<div class="a" style="left:491px;top:375px;width:91px;height:1px;background:rgba(0,0,0,0.14);"></div>
<div class="a" style="left:582px;top:375px;width:104px;height:1px;background:rgba(0,0,0,0.055);"></div>
<div class="a" style="left:686px;top:375px;width:91px;height:1px;background:rgba(0,0,0,0.14);"></div>
<div class="a" style="left:777px;top:375px;width:81px;height:1px;background:rgba(0,0,0,0.14);"></div>
<div class="a" style="left:858px;top:375px;width:8px;height:1px;background:rgba(0,0,0,0.055);"></div>
<div class="a" style="left:19px;top:375px;width:9px;height:1px;background:#111;"></div>
<div class="a" style="left:29px;top:358px;width:837px;height:18px;background:#a6b9e3;border:1px solid #4f8fe0;"></div>
<div class="a" style="left:30px;top:359px;width:9px;height:16px;background:#a8dc94;"></div>
<div class="a" style="left:107px;top:359px;width:1px;height:16px;background:#c6d2ee;"></div>
<div class="a" style="left:299px;top:359px;width:1px;height:16px;background:#c6d2ee;"></div>
<div class="a" style="left:352px;top:359px;width:1px;height:16px;background:#c6d2ee;"></div>
<div class="a" style="left:406px;top:359px;width:1px;height:16px;background:#c6d2ee;"></div>
<div class="a" style="left:458px;top:359px;width:1px;height:16px;background:#c6d2ee;"></div>
<div class="a" style="left:490px;top:359px;width:1px;height:16px;background:#c6d2ee;"></div>
<div class="a" style="left:581px;top:359px;width:1px;height:16px;background:#c6d2ee;"></div>
<div class="a" style="left:685px;top:359px;width:1px;height:16px;background:#c6d2ee;"></div>
<div class="a" style="left:776px;top:359px;width:1px;height:16px;background:#c6d2ee;"></div>
<div class="a" style="left:857px;top:359px;width:1px;height:16px;background:#c6d2ee;"></div>
<svg class="a" style="left:22px;top:365px" width="7" height="8" viewBox="0 0 7 8"><path d="M0.8 0.3 L6 3.9 L0.8 7.5Z" fill="#111"/></svg>
<div class="a t" style="left:42.30px;top:208.69px;font-size:11px;line-height:11px;transform:scaleX(0.9580);transform-origin:0 0;color:#111;">00007</div>
<div class="a t" style="left:111.30px;top:208.69px;font-size:11px;line-height:11px;transform:scaleX(0.9750);transform-origin:0 0;color:#111;">Vajcia 30ks kartón</div>
<div class="a t" style="left:323.58px;top:208.69px;font-size:11px;line-height:11px;font-weight:bold;transform:scaleX(0.9600);transform-origin:0 0;color:#7c1625;">3,500</div>
<div class="a t" style="left:377.85px;top:208.69px;font-size:11px;line-height:11px;transform:scaleX(0.9500);transform-origin:0 0;color:#111;">1,500</div>
<div class="a t" style="left:429.85px;top:208.69px;font-size:11px;line-height:11px;transform:scaleX(0.9500);transform-origin:0 0;color:#111;">1,500</div>
<div class="a t" style="left:552.85px;top:208.69px;font-size:11px;line-height:11px;transform:scaleX(0.9500);transform-origin:0 0;color:#111;">1,150</div>
<div class="a t" style="left:656.85px;top:208.69px;font-size:11px;line-height:11px;transform:scaleX(0.9500);transform-origin:0 0;color:#111;">1,725</div>
<div class="a t" style="left:747.85px;top:208.69px;font-size:11px;line-height:11px;transform:scaleX(0.9500);transform-origin:0 0;color:#111;">1,000</div>
<div class="a t" style="left:823.04px;top:208.69px;font-size:11px;line-height:11px;transform:scaleX(0.9500);transform-origin:0 0;color:#111;">1,0000</div>
<div class="a t" style="left:462.50px;top:208.69px;font-size:11px;line-height:11px;transform:scaleX(0.9300);transform-origin:0 0;color:#111;">ks</div>
<div class="a t" style="left:860.30px;top:208.69px;font-size:11px;line-height:11px;transform:scaleX(1.0222);transform-origin:0 0;color:#111;">Š</div>
<div class="a t" style="left:42.30px;top:225.69px;font-size:11px;line-height:11px;transform:scaleX(0.9580);transform-origin:0 0;color:#111;">00008</div>
<div class="a t" style="left:111.30px;top:225.69px;font-size:11px;line-height:11px;transform:scaleX(0.9750);transform-origin:0 0;color:#111;">Maslo 500g</div>
<div class="a t" style="left:323.58px;top:225.69px;font-size:11px;line-height:11px;font-weight:bold;transform:scaleX(0.9600);transform-origin:0 0;color:#7c1625;">3,500</div>
<div class="a t" style="left:377.85px;top:225.69px;font-size:11px;line-height:11px;transform:scaleX(0.9500);transform-origin:0 0;color:#111;">1,500</div>
<div class="a t" style="left:429.85px;top:225.69px;font-size:11px;line-height:11px;transform:scaleX(0.9500);transform-origin:0 0;color:#111;">1,500</div>
<div class="a t" style="left:552.85px;top:225.69px;font-size:11px;line-height:11px;transform:scaleX(0.9500);transform-origin:0 0;color:#111;">0,980</div>
<div class="a t" style="left:656.85px;top:225.69px;font-size:11px;line-height:11px;transform:scaleX(0.9500);transform-origin:0 0;color:#111;">1,470</div>
<div class="a t" style="left:747.85px;top:225.69px;font-size:11px;line-height:11px;transform:scaleX(0.9500);transform-origin:0 0;color:#111;">1,000</div>
<div class="a t" style="left:823.04px;top:225.69px;font-size:11px;line-height:11px;transform:scaleX(0.9500);transform-origin:0 0;color:#111;">1,0000</div>
<div class="a t" style="left:462.50px;top:225.69px;font-size:11px;line-height:11px;transform:scaleX(0.9300);transform-origin:0 0;color:#111;">ks</div>
<div class="a t" style="left:860.30px;top:225.69px;font-size:11px;line-height:11px;transform:scaleX(1.0222);transform-origin:0 0;color:#111;">Š</div>
<div class="a t" style="left:42.30px;top:242.69px;font-size:11px;line-height:11px;transform:scaleX(0.9580);transform-origin:0 0;color:#111;">00009</div>
<div class="a t" style="left:111.30px;top:242.69px;font-size:11px;line-height:11px;transform:scaleX(0.9750);transform-origin:0 0;color:#111;">Syr roztierateľný</div>
<div class="a t" style="left:323.58px;top:242.69px;font-size:11px;line-height:11px;font-weight:bold;transform:scaleX(0.9600);transform-origin:0 0;color:#7c1625;">5,500</div>
<div class="a t" style="left:377.85px;top:242.69px;font-size:11px;line-height:11px;transform:scaleX(0.9500);transform-origin:0 0;color:#111;">4,500</div>
<div class="a t" style="left:429.85px;top:242.69px;font-size:11px;line-height:11px;transform:scaleX(0.9500);transform-origin:0 0;color:#111;">4,500</div>
<div class="a t" style="left:552.85px;top:242.69px;font-size:11px;line-height:11px;transform:scaleX(0.9500);transform-origin:0 0;color:#111;">1,100</div>
<div class="a t" style="left:656.85px;top:242.69px;font-size:11px;line-height:11px;transform:scaleX(0.9500);transform-origin:0 0;color:#111;">4,950</div>
<div class="a t" style="left:747.85px;top:242.69px;font-size:11px;line-height:11px;transform:scaleX(0.9500);transform-origin:0 0;color:#111;">3,000</div>
<div class="a t" style="left:823.04px;top:242.69px;font-size:11px;line-height:11px;transform:scaleX(0.9500);transform-origin:0 0;color:#111;">1,0000</div>
<div class="a t" style="left:462.50px;top:242.69px;font-size:11px;line-height:11px;transform:scaleX(0.9300);transform-origin:0 0;color:#111;">ks</div>
<div class="a t" style="left:860.30px;top:242.69px;font-size:11px;line-height:11px;transform:scaleX(1.0222);transform-origin:0 0;color:#111;">Š</div>
<div class="a t" style="left:42.30px;top:259.69px;font-size:11px;line-height:11px;transform:scaleX(0.9580);transform-origin:0 0;color:#111;">00010</div>
<div class="a t" style="left:111.30px;top:259.69px;font-size:11px;line-height:11px;transform:scaleX(0.9750);transform-origin:0 0;color:#111;">Horčica plnotučná 400g</div>
<div class="a t" style="left:323.58px;top:259.69px;font-size:11px;line-height:11px;font-weight:bold;transform:scaleX(0.9600);transform-origin:0 0;color:#7c1625;">1,250</div>
<div class="a t" style="left:377.85px;top:259.69px;font-size:11px;line-height:11px;transform:scaleX(0.9500);transform-origin:0 0;color:#111;">0,750</div>
<div class="a t" style="left:429.85px;top:259.69px;font-size:11px;line-height:11px;transform:scaleX(0.9500);transform-origin:0 0;color:#111;">0,750</div>
<div class="a t" style="left:552.85px;top:259.69px;font-size:11px;line-height:11px;transform:scaleX(0.9500);transform-origin:0 0;color:#111;">0,280</div>
<div class="a t" style="left:656.85px;top:259.69px;font-size:11px;line-height:11px;transform:scaleX(0.9500);transform-origin:0 0;color:#111;">0,210</div>
<div class="a t" style="left:747.85px;top:259.69px;font-size:11px;line-height:11px;transform:scaleX(0.9500);transform-origin:0 0;color:#111;">0,500</div>
<div class="a t" style="left:823.04px;top:259.69px;font-size:11px;line-height:11px;transform:scaleX(0.9500);transform-origin:0 0;color:#111;">1,0000</div>
<div class="a t" style="left:462.50px;top:259.69px;font-size:11px;line-height:11px;transform:scaleX(0.9300);transform-origin:0 0;color:#111;">ks</div>
<div class="a t" style="left:860.30px;top:259.69px;font-size:11px;line-height:11px;transform:scaleX(1.0222);transform-origin:0 0;color:#111;">Š</div>
<div class="a t" style="left:42.30px;top:276.69px;font-size:11px;line-height:11px;transform:scaleX(0.9843);transform-origin:0 0;color:#111;">00011</div>
<div class="a t" style="left:111.30px;top:276.69px;font-size:11px;line-height:11px;transform:scaleX(0.9750);transform-origin:0 0;color:#111;">Uhorky sterilizované 3500g</div>
<div class="a t" style="left:323.58px;top:276.69px;font-size:11px;line-height:11px;font-weight:bold;transform:scaleX(0.9600);transform-origin:0 0;color:#7c1625;">5,500</div>
<div class="a t" style="left:377.85px;top:276.69px;font-size:11px;line-height:11px;transform:scaleX(0.9500);transform-origin:0 0;color:#111;">4,500</div>
<div class="a t" style="left:429.85px;top:276.69px;font-size:11px;line-height:11px;transform:scaleX(0.9500);transform-origin:0 0;color:#111;">4,500</div>
<div class="a t" style="left:552.85px;top:276.69px;font-size:11px;line-height:11px;transform:scaleX(0.9500);transform-origin:0 0;color:#111;">2,500</div>
<div class="a t" style="left:651.82px;top:276.69px;font-size:11px;line-height:11px;transform:scaleX(0.9500);transform-origin:0 0;color:#111;">11,250</div>
<div class="a t" style="left:747.85px;top:276.69px;font-size:11px;line-height:11px;transform:scaleX(0.9500);transform-origin:0 0;color:#111;">3,000</div>
<div class="a t" style="left:823.04px;top:276.69px;font-size:11px;line-height:11px;transform:scaleX(0.9500);transform-origin:0 0;color:#111;">1,0000</div>
<div class="a t" style="left:462.50px;top:276.69px;font-size:11px;line-height:11px;transform:scaleX(0.9300);transform-origin:0 0;color:#111;">ks</div>
<div class="a t" style="left:860.30px;top:276.69px;font-size:11px;line-height:11px;transform:scaleX(1.0222);transform-origin:0 0;color:#111;">Š</div>
<div class="a t" style="left:42.30px;top:293.69px;font-size:11px;line-height:11px;transform:scaleX(0.9580);transform-origin:0 0;color:#111;">00012</div>
<div class="a t" style="left:111.30px;top:293.69px;font-size:11px;line-height:11px;transform:scaleX(0.9750);transform-origin:0 0;color:#111;">Kápia zaváraná 350g</div>
<div class="a t" style="left:323.58px;top:293.69px;font-size:11px;line-height:11px;font-weight:bold;transform:scaleX(0.9600);transform-origin:0 0;color:#7c1625;">7,000</div>
<div class="a t" style="left:377.85px;top:293.69px;font-size:11px;line-height:11px;transform:scaleX(0.9500);transform-origin:0 0;color:#111;">3,000</div>
<div class="a t" style="left:429.85px;top:293.69px;font-size:11px;line-height:11px;transform:scaleX(0.9500);transform-origin:0 0;color:#111;">3,000</div>
<div class="a t" style="left:552.85px;top:293.69px;font-size:11px;line-height:11px;transform:scaleX(0.9500);transform-origin:0 0;color:#111;">0,870</div>
<div class="a t" style="left:656.85px;top:293.69px;font-size:11px;line-height:11px;transform:scaleX(0.9500);transform-origin:0 0;color:#111;">2,610</div>
<div class="a t" style="left:747.85px;top:293.69px;font-size:11px;line-height:11px;transform:scaleX(0.9500);transform-origin:0 0;color:#111;">2,000</div>
<div class="a t" style="left:823.04px;top:293.69px;font-size:11px;line-height:11px;transform:scaleX(0.9500);transform-origin:0 0;color:#111;">1,0000</div>
<div class="a t" style="left:462.50px;top:293.69px;font-size:11px;line-height:11px;transform:scaleX(0.9300);transform-origin:0 0;color:#111;">ks</div>
<div class="a t" style="left:860.30px;top:293.69px;font-size:11px;line-height:11px;transform:scaleX(1.0222);transform-origin:0 0;color:#111;">Š</div>
<div class="a t" style="left:42.30px;top:310.69px;font-size:11px;line-height:11px;transform:scaleX(0.9580);transform-origin:0 0;color:#111;">00013</div>
<div class="a t" style="left:111.30px;top:310.69px;font-size:11px;line-height:11px;transform:scaleX(0.9750);transform-origin:0 0;color:#111;">Šunková saláma 1kg</div>
<div class="a t" style="left:323.58px;top:310.69px;font-size:11px;line-height:11px;font-weight:bold;transform:scaleX(0.9600);transform-origin:0 0;color:#7c1625;">0,750</div>
<div class="a t" style="left:377.85px;top:310.69px;font-size:11px;line-height:11px;transform:scaleX(0.9500);transform-origin:0 0;color:#111;">2,250</div>
<div class="a t" style="left:429.85px;top:310.69px;font-size:11px;line-height:11px;transform:scaleX(0.9500);transform-origin:0 0;color:#111;">2,250</div>
<div class="a t" style="left:552.85px;top:310.69px;font-size:11px;line-height:11px;transform:scaleX(0.9500);transform-origin:0 0;color:#111;">3,100</div>
<div class="a t" style="left:656.85px;top:310.69px;font-size:11px;line-height:11px;transform:scaleX(0.9500);transform-origin:0 0;color:#111;">6,975</div>
<div class="a t" style="left:747.85px;top:310.69px;font-size:11px;line-height:11px;transform:scaleX(0.9500);transform-origin:0 0;color:#111;">1,500</div>
<div class="a t" style="left:823.04px;top:310.69px;font-size:11px;line-height:11px;transform:scaleX(0.9500);transform-origin:0 0;color:#111;">1,0000</div>
<div class="a t" style="left:462.50px;top:310.69px;font-size:11px;line-height:11px;transform:scaleX(0.9300);transform-origin:0 0;color:#111;">kg</div>
<div class="a t" style="left:860.30px;top:310.69px;font-size:11px;line-height:11px;transform:scaleX(1.0222);transform-origin:0 0;color:#111;">Š</div>
<div class="a t" style="left:42.30px;top:327.69px;font-size:11px;line-height:11px;transform:scaleX(0.9580);transform-origin:0 0;color:#111;">00001</div>
<div class="a t" style="left:111.30px;top:327.69px;font-size:11px;line-height:11px;transform:scaleX(0.9750);transform-origin:0 0;color:#111;">Práca</div>
<div class="a t" style="left:323.58px;top:327.69px;font-size:11px;line-height:11px;font-weight:bold;transform:scaleX(0.9600);transform-origin:0 0;color:#7c1625;">0,000</div>
<div class="a t" style="left:377.85px;top:327.69px;font-size:11px;line-height:11px;transform:scaleX(0.9500);transform-origin:0 0;color:#111;">5,250</div>
<div class="a t" style="left:429.85px;top:327.69px;font-size:11px;line-height:11px;transform:scaleX(0.9500);transform-origin:0 0;color:#111;">5,250</div>
<div class="a t" style="left:552.85px;top:327.69px;font-size:11px;line-height:11px;transform:scaleX(0.9500);transform-origin:0 0;color:#111;">4,000</div>
<div class="a t" style="left:651.04px;top:327.69px;font-size:11px;line-height:11px;transform:scaleX(0.9500);transform-origin:0 0;color:#111;">21,000</div>
<div class="a t" style="left:747.85px;top:327.69px;font-size:11px;line-height:11px;transform:scaleX(0.9500);transform-origin:0 0;color:#111;">3,500</div>
<div class="a t" style="left:823.04px;top:327.69px;font-size:11px;line-height:11px;transform:scaleX(0.9500);transform-origin:0 0;color:#111;">1,0000</div>
<div class="a t" style="left:462.50px;top:327.69px;font-size:11px;line-height:11px;transform:scaleX(0.9300);transform-origin:0 0;color:#111;">ks</div>
<div class="a t" style="left:860.30px;top:327.69px;font-size:11px;line-height:11px;transform:scaleX(1.0222);transform-origin:0 0;color:#111;">Š</div>
<div class="a t" style="left:42.30px;top:344.69px;font-size:11px;line-height:11px;transform:scaleX(0.9580);transform-origin:0 0;color:#111;">00015</div>
<div class="a t" style="left:111.30px;top:344.69px;font-size:11px;line-height:11px;transform:scaleX(0.9750);transform-origin:0 0;color:#111;">Hlávkový šalát</div>
<div class="a t" style="left:323.58px;top:344.69px;font-size:11px;line-height:11px;font-weight:bold;transform:scaleX(0.9600);transform-origin:0 0;color:#7c1625;">0,500</div>
<div class="a t" style="left:377.85px;top:344.69px;font-size:11px;line-height:11px;transform:scaleX(0.9500);transform-origin:0 0;color:#111;">1,500</div>
<div class="a t" style="left:429.85px;top:344.69px;font-size:11px;line-height:11px;transform:scaleX(0.9500);transform-origin:0 0;color:#111;">1,500</div>
<div class="a t" style="left:552.85px;top:344.69px;font-size:11px;line-height:11px;transform:scaleX(0.9500);transform-origin:0 0;color:#111;">0,800</div>
<div class="a t" style="left:656.85px;top:344.69px;font-size:11px;line-height:11px;transform:scaleX(0.9500);transform-origin:0 0;color:#111;">1,200</div>
<div class="a t" style="left:747.85px;top:344.69px;font-size:11px;line-height:11px;transform:scaleX(0.9500);transform-origin:0 0;color:#111;">1,000</div>
<div class="a t" style="left:823.04px;top:344.69px;font-size:11px;line-height:11px;transform:scaleX(0.9500);transform-origin:0 0;color:#111;">1,0000</div>
<div class="a t" style="left:462.50px;top:344.69px;font-size:11px;line-height:11px;transform:scaleX(0.9300);transform-origin:0 0;color:#111;">ks</div>
<div class="a t" style="left:42.30px;top:361.69px;font-size:11px;line-height:11px;transform:scaleX(0.9580);transform-origin:0 0;color:#fff;">00016</div>
<div class="a t" style="left:111.30px;top:361.69px;font-size:11px;line-height:11px;transform:scaleX(0.9750);transform-origin:0 0;color:#fff;">Umývací prostriedok</div>
<div class="a t" style="left:323.58px;top:361.69px;font-size:11px;line-height:11px;font-weight:bold;transform:scaleX(0.9600);transform-origin:0 0;color:#fff;">0,000</div>
<div class="a t" style="left:377.85px;top:361.69px;font-size:11px;line-height:11px;transform:scaleX(0.9500);transform-origin:0 0;color:#fff;">0,000</div>
<div class="a t" style="left:429.85px;top:361.69px;font-size:11px;line-height:11px;transform:scaleX(0.9500);transform-origin:0 0;color:#fff;">0,250</div>
<div class="a t" style="left:552.85px;top:361.69px;font-size:11px;line-height:11px;transform:scaleX(0.9500);transform-origin:0 0;color:#fff;">2,500</div>
<div class="a t" style="left:656.85px;top:361.69px;font-size:11px;line-height:11px;transform:scaleX(0.9500);transform-origin:0 0;color:#fff;">0,625</div>
<div class="a t" style="left:747.85px;top:361.69px;font-size:11px;line-height:11px;transform:scaleX(0.9500);transform-origin:0 0;color:#fff;">1,000</div>
<div class="a t" style="left:823.04px;top:361.69px;font-size:11px;line-height:11px;transform:scaleX(0.9500);transform-origin:0 0;color:#fff;">1,0000</div>
<div class="a t" style="left:462.50px;top:361.69px;font-size:11px;line-height:11px;transform:scaleX(0.9300);transform-origin:0 0;color:#fff;">ks</div>
<div class="a" style="left:866px;top:189px;width:18px;height:199px;background:#f0f0f0;"></div>
<div class="a" style="left:866px;top:189px;width:18px;height:16px;background:#f7f7f7;"></div>
<div class="a" style="left:867px;top:206px;width:15px;height:167px;background:#c6c6c6;"></div>
<svg class="a" style="left:869px;top:194px" width="12" height="9" viewBox="0 0 12 9"><path d="M2.6 6.2 L5.8 3 L9 6.2" stroke="#505050" stroke-width="2.3" fill="none"/></svg>
<svg class="a" style="left:869px;top:376px" width="12" height="9" viewBox="0 0 12 9"><path d="M2.6 3 L5.8 6.2 L9 3" stroke="#505050" stroke-width="2.3" fill="none"/></svg>
<div class="a" style="left:19px;top:388px;width:847px;height:16px;background:#f0f0f0;"></div>
<div class="a" style="left:20px;top:388px;width:4px;height:16px;background:#111;"></div>
<div class="a" style="left:41px;top:389px;width:202px;height:14px;background:#c8c8c8;"></div>
<svg class="a" style="left:28px;top:391px" width="9" height="10" viewBox="0 0 9 10"><path d="M6.5 1.5 L2.5 5 L6.5 8.5" stroke="#555" stroke-width="2" fill="none"/></svg>
<svg class="a" style="left:854px;top:391px" width="9" height="10" viewBox="0 0 9 10"><path d="M2.5 1.5 L6.5 5 L2.5 8.5" stroke="#555" stroke-width="2" fill="none"/></svg>
<div class="a" style="left:866px;top:388px;width:18px;height:16px;background:#fff;"></div>
<div class="a" style="left:613px;top:413px;width:273px;height:37px;border:1px solid #d6d6d6;border-radius:1px;box-shadow:inset 1px 1px 0 #fbfbfb;"></div>
<div class="a" style="left:622px;top:411px;width:49px;height:6px;background:#f0f0f0;"></div>
<div class="a t" style="left:624.00px;top:410.74px;font-size:9.4px;line-height:9.4px;font-weight:bold;transform:scaleX(0.9571);transform-origin:0 0;color:#6e1c7e;">Súčty cien</div>
<div class="a t" style="left:620.30px;top:430.39px;font-size:11px;line-height:11px;transform:scaleX(1.0249);transform-origin:0 0;color:#111;">Výdaj</div>
<div class="a t" style="left:712.00px;top:430.39px;font-size:11px;line-height:11px;transform:scaleX(0.9337);transform-origin:0 0;color:#111;">65,51</div>
<div class="a" style="left:16px;top:462px;width:875px;height:36px;border:1px solid #d6d6d6;border-radius:1px;box-shadow:inset 1px 1px 0 #fbfbfb;"></div>
<div class="a" style="left:23.3px;top:460px;width:31.499999999999996px;height:6px;background:#f0f0f0;"></div>
<div class="a t" style="left:25.30px;top:458.74px;font-size:9.4px;line-height:9.4px;font-weight:bold;transform:scaleX(0.9573);transform-origin:0 0;color:#6e1c7e;">Úkony</div>
<div class="a t" style="left:29.40px;top:475.47px;font-size:12.2px;line-height:12.2px;color:#111;"><u>O</u>dobrať</div>
<div class="a t" style="left:592.70px;top:476.69px;font-size:11px;line-height:11px;transform:scaleX(0.9541);transform-origin:0 0;color:#111;">Stav</div>
<div class="a" style="left:619px;top:472px;width:120px;height:21px;background:#fff;border:1px solid #a3a3a3;"></div>
<div class="a t" style="left:624.20px;top:477.69px;font-size:11px;line-height:11px;transform:scaleX(0.9907);transform-origin:0 0;color:#111;">3 - Spracovaná</div>
<div class="a" style="left:720px;top:474px;width:17px;height:17px;background:linear-gradient(#f0f0f0,#e2e2e2);border:1px solid #8f8f8f;"></div>
<svg class="a" style="left:723px;top:479px" width="11" height="9" viewBox="0 0 11 9"><path d="M2 2.8 L5.5 6.3 L9 2.8" stroke="#555" stroke-width="2.2" fill="none"/></svg>
<div class="a t" style="left:760.90px;top:475.67px;font-size:12.2px;line-height:12.2px;transform:scaleX(0.9940);transform-origin:0 0;color:#111;"><u>U</u>ložiť</div>
<div class="a" style="left:816px;top:472px;width:68px;height:19px;background:linear-gradient(#f2f2f2,#e0e0e0);border:1px solid #9e9e9e;border-radius:1px;"></div>
<div class="a t" style="left:828.70px;top:475.67px;font-size:12.2px;line-height:12.2px;transform:scaleX(0.9747);transform-origin:0 0;color:#111;"><u>Z</u>atvoriť</div>
</body></html>
